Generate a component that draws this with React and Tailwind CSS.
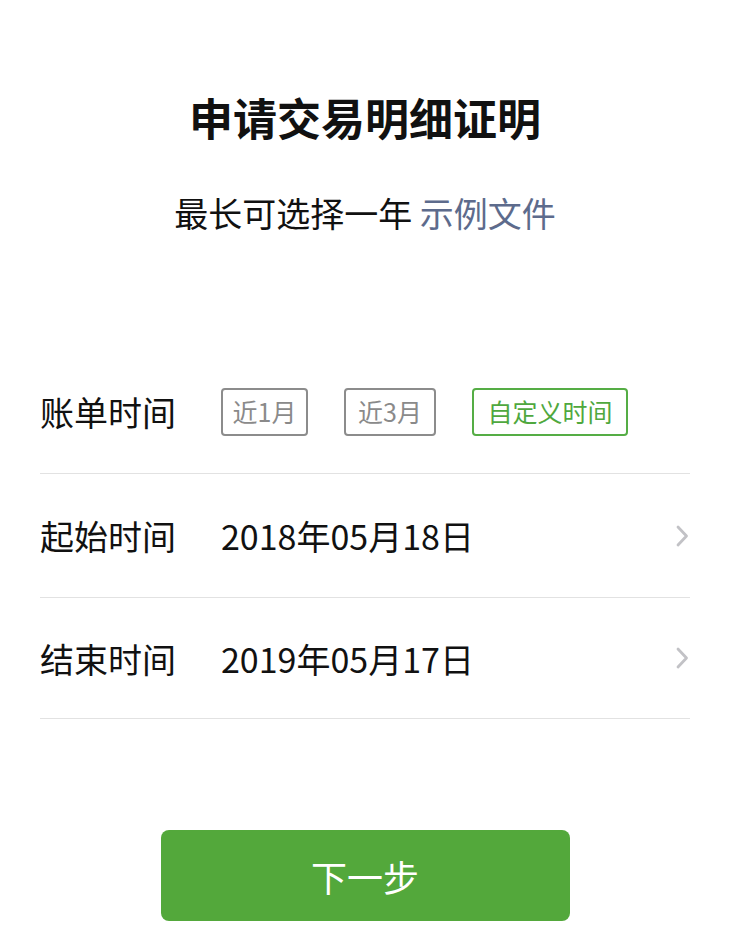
import React from "react";

const FONT = { fontFamily: '"Noto Sans CJK SC", "Noto Sans", sans-serif' };

function Chevron() {
  return (
    <svg width="14" height="24" viewBox="0 0 14 24" fill="none">
      <path d="M3 3l8.5 9-8.5 9" stroke="#c2c2c6" strokeWidth="2.8" strokeLinecap="round" strokeLinejoin="round" />
    </svg>
  );
}

function DateRow({ label, value, last }) {
  return (
    <div className={`flex items-center border-b border-[#e2e2e2] ${last ? "h-[121px]" : "h-[124px]"}`}>
      <div className="w-[181px] text-[34px] text-[#111]">{label}</div>
      <div className="flex-1 text-[34px] text-[#111]">{value}</div>
      <div className="pr-[1px]">
        <Chevron />
      </div>
    </div>
  );
}

export default function App() {
  const ranges = [
    { label: "近1月", w: "w-[87px]", active: false },
    { label: "近3月", w: "w-[92px]", active: false },
    { label: "自定义时间", w: "w-[156px]", active: true },
  ];

  return (
    <div className="w-full min-h-[933px] bg-white" style={FONT}>
      <h1 className="pt-[91px] text-center text-[44px] leading-[53px] font-bold text-[#111]">申请交易明细证明</h1>
      <div className="mt-[49px] text-center text-[34px] leading-[40px] text-[#111]">
        最长可选择一年 <span className="text-[#5d6b8c]">示例文件</span>
      </div>

      <div className="mt-[117px] px-10">
        <div className="flex items-center h-[124px] border-b border-[#e2e2e2]">
          <div className="w-[181px] text-[34px] text-[#111]">账单时间</div>
          <div className="flex gap-[36px]">
            {ranges.map((r) => (
              <div
                key={r.label}
                className={`${r.w} h-[48px] flex items-center justify-center rounded-[4px] border-2 text-[25px] ${
                  r.active ? "border-[#55ad45] text-[#4fa83e]" : "border-[#8c8c8c] text-[#8a8a8a]"
                }`}
              >
                {r.label}
              </div>
            ))}
          </div>
        </div>
        <DateRow label="起始时间" value="2018年05月18日" />
        <DateRow label="结束时间" value="2019年05月17日" last />
      </div>

      <div className="mt-[111px] flex justify-center">
        <button className="w-[409px] h-[91px] rounded-[8px] bg-[#53a83b] text-white text-[36px]">下一步</button>
      </div>
    </div>
  );
}
